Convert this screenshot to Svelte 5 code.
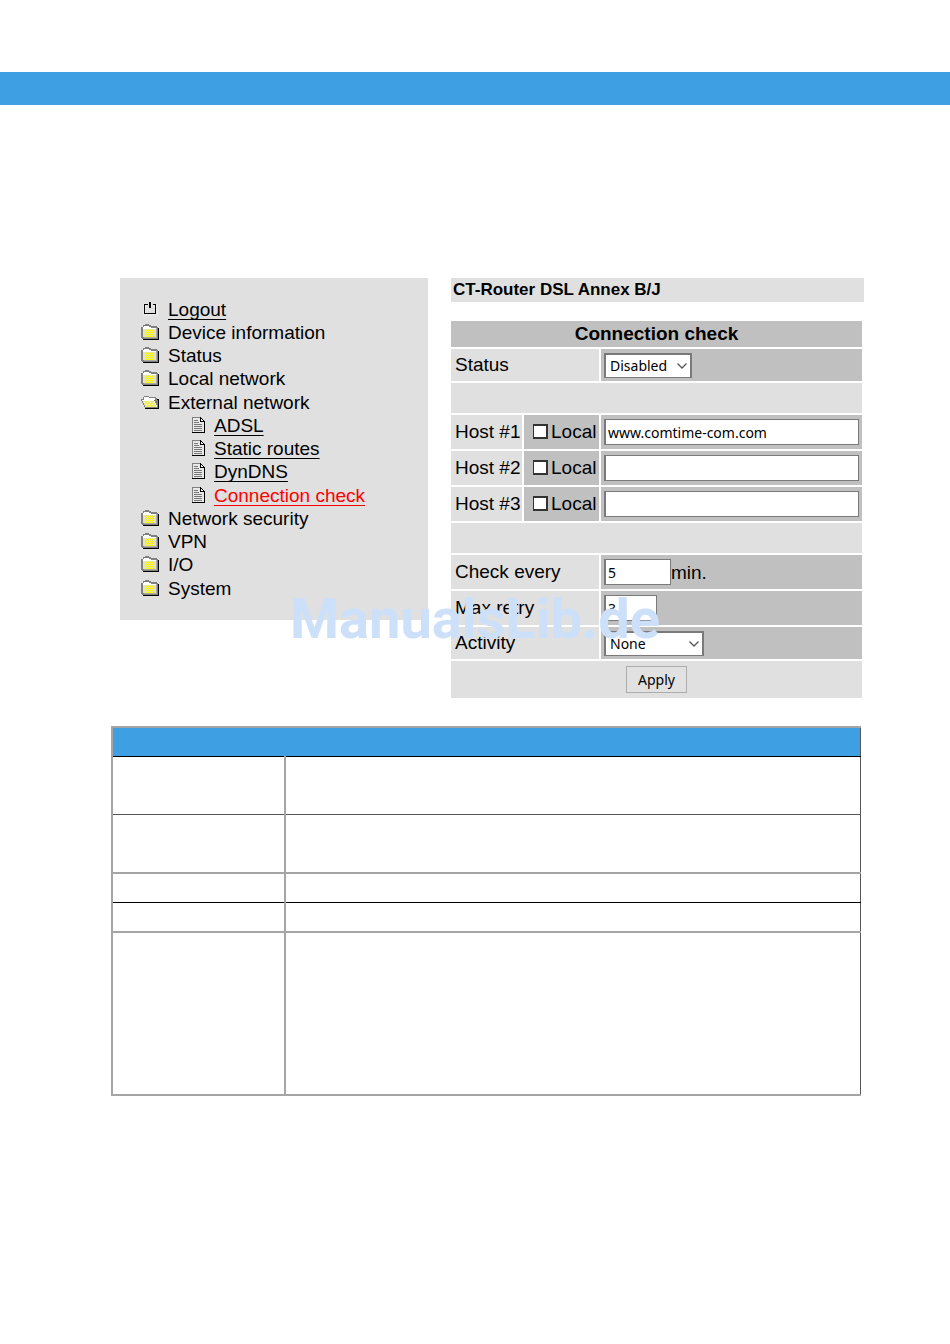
<script lang="ts">
    type MenuItem = {
        label: string;
        icon: 'power' | 'folder' | 'open' | 'page';
        link?: boolean;
        active?: boolean;
    };

    const menu: MenuItem[] = [
        { label: 'Logout', icon: 'power', link: true },
        { label: 'Device information', icon: 'folder' },
        { label: 'Status', icon: 'folder' },
        { label: 'Local network', icon: 'folder' },
        { label: 'External network', icon: 'open' },
        { label: 'ADSL', icon: 'page', link: true },
        { label: 'Static routes', icon: 'page', link: true },
        { label: 'DynDNS', icon: 'page', link: true },
        { label: 'Connection check', icon: 'page', link: true, active: true },
        { label: 'Network security', icon: 'folder' },
        { label: 'VPN', icon: 'folder' },
        { label: 'I/O', icon: 'folder' },
        { label: 'System', icon: 'folder' }
    ];

    let hosts = $state([
        { id: 1, local: false, address: 'www.comtime-com.com' },
        { id: 2, local: false, address: '' },
        { id: 3, local: false, address: '' }
    ]);

    let status = $state('Disabled');
    let interval = $state('5');
    let retries = $state('3');
    let activity = $state('None');

    const parameterRows = ['tall', 'tall', 'short', 'short', 'notes'];

    // Every other pixel of the folder front
    let checker = '';
    for (let y = 5; y < 13; y++) {
        for (let x = 4 + (y % 2); x < 13; x += 2) {
            checker += `M${x} ${y}h1v1h-1z`;
        }
    }
</script>

{#snippet menuIcon(name: string)}
    <svg class="icon" viewBox="0 0 18 16" shape-rendering="crispEdges" aria-hidden="true">
        {#if name === 'power'}
            <path d="M6 4H3V13H15V4H12M9 1V7" fill="none" stroke="#e8e8e8" stroke-width="3" />
            <path d="M6.5 3.5H3.5V12.5H14.5V3.5H11.5" fill="none" stroke="#000" />
            <path d="M8 1H10V7H8z" fill="#000" />
        {:else if name === 'folder'}
            <path d="M17 4H18V16H2V15H17z" fill="#000" />
            <path d="M0 3H2V1H4V0H8V1H10V2H16V3H17V15H1V14H0z" fill="#808080" />
            <path d="M3 2H8V3H10V4H15V5H2V3H3z" fill="#fff" />
            <path d="M2 5H15V13H2z" fill="#e4e4bc" />
            <path d="M4 5H13V13H4z" fill="#ffff00" />
            <path d={checker} fill="#e2e08c" />
            <path d="M15 4H16V14H3V13H15z" fill="#aaa" />
        {:else if name === 'open'}
            <path d="M16 5H18V15H4V14H16z" fill="#000" />
            <path d="M2 3H3V2H8V3H15V4H16V6H17V14H4V13H3V11H2V9H1V7H0V5H2z" fill="#808080" />
            <path d="M3 3H8V4H14V6H3z" fill="#fff" />
            <path d="M1 6H13V7H14V9H15V11H16V13H4V11H3V9H2V7H1z" fill="#f1ee66" />
            <path d="M1 6H13V7H1zM3 8h1v1h-1zM6 8h1v1h-1zM9 8h1v1h-1zM5 10h1v1h-1zM8 10h1v1h-1zM11 10h1v1h-1z" fill="#fff" />
            <path d="M13 7H14V9H15V11H16V13H15V11H14V9H13z" fill="#fff" />
        {:else}
            <path d="M3 0H12V1H13V2H14V3H15V4H16V16H3z" fill="#000" />
            <path d="M3 0H11V1H4V15H3z" fill="#808080" />
            <path d="M4 1H11V5H15V15H4z" fill="#e8e8e8" />
            <path d="M12 2H13V3H14V4H12z" fill="#fff" />
            <path d="M5 3.5H9M5 5.5H10M5 7.5H13M5 9.5H13M5 11.5H13M5 13.5H13" stroke="#777" />
        {/if}
    </svg>
{/snippet}

{#snippet chevron()}
    <svg class="chevron" viewBox="0 0 10 6" aria-hidden="true">
        <path d="M0.5 0.5L5 5L9.5 0.5" fill="none" stroke="#555" stroke-width="1.3" />
    </svg>
{/snippet}

<div class="page">
    <div class="band"></div>

    <div class="screen">
        <nav class="sidebar">
            <ul>
                {#each menu as item}
                    <li class:nested={item.icon === 'page'}>
                        {@render menuIcon(item.icon)}
                        {#if item.link}
                            <a href="#top" class:active={item.active}>{item.label}</a>
                        {:else}
                            <span>{item.label}</span>
                        {/if}
                    </li>
                {/each}
            </ul>
        </nav>

        <main>
            <h1>CT-Router DSL Annex B/J</h1>

            <form onsubmit={(event) => event.preventDefault()}>
                <h2>Connection check</h2>

                <div class="row select-row">
                    <label class="name" for="status">Status</label>
                    <div class="value">
                        <span class="select short">
                            <select id="status" bind:value={status}>
                                <option>Disabled</option>
                                <option>Enabled</option>
                            </select>
                            {@render chevron()}
                        </span>
                    </div>
                </div>

                <div class="spacer"></div>

                {#each hosts as host (host.id)}
                    <div class="row host">
                        <label class="name" for="host-{host.id}">Host #{host.id}</label>
                        <label class="local">
                            <input type="checkbox" bind:checked={host.local} />
                            Local
                        </label>
                        <div class="value">
                            <input type="text" id="host-{host.id}" bind:value={host.address} />
                        </div>
                    </div>
                {/each}

                <div class="spacer"></div>

                <div class="row">
                    <label class="name" for="interval">Check every</label>
                    <div class="value">
                        <input class="interval" type="text" id="interval" bind:value={interval} />
                        <span>min.</span>
                    </div>
                </div>

                <div class="row">
                    <label class="name" for="retries">Max retry</label>
                    <div class="value">
                        <input class="retries" type="text" id="retries" bind:value={retries} />
                    </div>
                </div>

                <div class="row select-row">
                    <label class="name" for="activity">Activity</label>
                    <div class="value">
                        <span class="select">
                            <select id="activity" bind:value={activity}>
                                <option>None</option>
                                <option>Reboot</option>
                            </select>
                            {@render chevron()}
                        </span>
                    </div>
                </div>

                <div class="actions">
                    <button type="submit">Apply</button>
                </div>
            </form>
        </main>
    </div>

    <div class="parameters">
        <table>
            <colgroup>
                <col class="key" />
                <col />
            </colgroup>
            <thead>
                <tr><th colspan="2"></th></tr>
            </thead>
            <tbody>
                {#each parameterRows as size}
                    <tr class={size}>
                        <td></td>
                        <td></td>
                    </tr>
                {/each}
            </tbody>
        </table>
    </div>

    <div class="watermark">ManualsLib.de</div>
</div>

<style>
    :global(body) {
        background: #fff;
    }

    .page {
        position: relative;
        padding: 72px 0;
        font-family: "Liberation Sans", Arial, sans-serif;
        font-size: 19px;
        line-height: 23px;
        color: #000;
    }

    .band {
        height: 33px;
        background: #3ea0e2;
    }

    .screen {
        display: flex;
        align-items: flex-start;
        gap: 23px;
        margin-top: 173px;
        padding: 0 86px 0 120px;
    }

    .sidebar {
        flex: none;
        box-sizing: border-box;
        width: 308px;
        padding: 20px 21px;
        background: #e0e0e0;
    }

    ul {
        margin: 0;
        padding: 0;
        list-style: none;
    }

    li {
        display: flex;
        align-items: center;
        gap: 9px;
        height: 23px;
    }

    /* a little air after every fourth entry */
    li:nth-child(4n) {
        margin-bottom: 1px;
    }

    .nested {
        gap: 7px;
        padding-left: 48px;
    }

    .icon {
        width: 18px;
        height: 16px;
        margin-bottom: 1px;
    }

    a {
        color: #000;
        text-decoration-thickness: 1px;
        text-decoration-skip-ink: none;
        text-underline-offset: 3px;
    }

    a.active {
        color: #f00;
    }

    main {
        flex: 1;
        min-width: 0;
    }

    h1 {
        margin: 0;
        padding: 0 2px;
        font-size: 17px;
        line-height: 24px;
        background: #e0e0e0;
    }

    form {
        display: grid;
        gap: 2px;
        margin: 19px 2px 0 0;
    }

    h2 {
        margin: 0;
        font-size: 19px;
        line-height: 26px;
        text-align: center;
        background: #c0c0c0;
    }

    .row {
        display: grid;
        grid-template-columns: 148px 1fr;
        gap: 2px;
        height: 34px;
    }

    .row.host {
        grid-template-columns: 71px 75px 1fr;
    }

    .row.select-row {
        height: 32px;
    }

    .name,
    .local,
    .value {
        display: flex;
        align-items: center;
        box-sizing: border-box;
        min-width: 0;
        white-space: nowrap;
        background: #c0c0c0;
    }

    .name {
        padding: 0 0 1px 4px;
        background: #e0e0e0;
    }

    .local {
        gap: 3px;
        padding: 0 0 2px 9px;
    }

    .value {
        padding: 0 3px;
    }

    .spacer {
        height: 30px;
        background: #e0e0e0;
    }

    input,
    select,
    button {
        box-sizing: border-box;
        margin: 0;
        border-radius: 0;
        font-family: "Noto Sans", "Open Sans", sans-serif;
        font-size: 14px;
        color: #000;
    }

    input[type="text"] {
        width: 100%;
        height: 26px;
        padding: 0 2px;
        border: 1px solid #7a7a7a;
        border-left-width: 2px;
        background: #fff;
    }

    input[type="text"].interval {
        width: 67px;
    }

    input[type="text"].retries {
        width: 53px;
    }

    input[type="checkbox"] {
        appearance: none;
        width: 15px;
        height: 15px;
        border: 2px solid #333;
        border-left-width: 1px;
        background: #fff;
    }

    .select {
        position: relative;
        width: 100px;
    }

    .select.short {
        width: 88px;
    }

    select {
        display: block;
        appearance: none;
        width: 100%;
        height: 25px;
        padding: 0 4px;
        border: 2px solid #7a7a7a;
        border-bottom-width: 1px;
        background: #fff;
    }

    .chevron {
        position: absolute;
        top: 10px;
        right: 5px;
        width: 10px;
        height: 6px;
        pointer-events: none;
    }

    .actions {
        display: flex;
        align-items: center;
        justify-content: center;
        height: 37px;
        background: #e0e0e0;
    }

    button {
        width: 61px;
        height: 27px;
        padding: 0;
        border: 1px solid #adadad;
        background: #e1e1e1;
    }

    .parameters {
        margin-top: 28px;
        padding: 0 89px 0 111px;
    }

    table {
        width: 100%;
        border: 2px solid #a5a5a5;
        border-right: 1px solid #555;
        border-collapse: collapse;
        table-layout: fixed;
    }

    th {
        height: 28px;
        padding: 0;
        border-bottom: 1px solid #000;
        background: #3ea0e2;
    }

    td {
        padding: 0;
        border-bottom: 2px solid #a5a5a5;
    }

    td:first-child {
        border-right: 2px solid #a5a5a5;
    }

    .key {
        width: 173px;
    }

    .tall td {
        height: 57px;
    }

    .short td {
        height: 28px;
    }

    .notes td {
        height: 161px;
    }

    .tall:first-child td {
        border-bottom: 1px solid #555;
    }

    .short:nth-child(3) td {
        border-bottom: 1px solid #000;
    }

    .watermark {
        position: absolute;
        top: 587px;
        right: 0;
        left: 0;
        font-family: Roboto, sans-serif;
        font-size: 56px;
        font-weight: 700;
        line-height: 64px;
        text-align: center;
        color: #cce0fa;
        pointer-events: none;
    }
</style>
